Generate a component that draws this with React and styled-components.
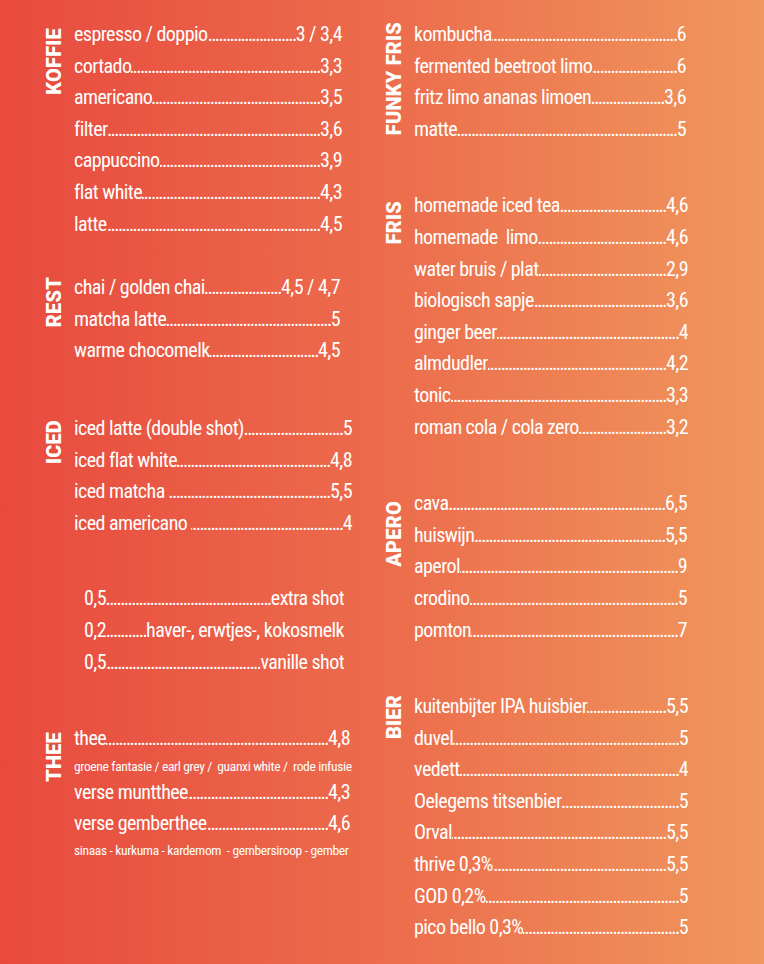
import React from "react";
import styled, { createGlobalStyle } from "styled-components";

const Global = createGlobalStyle`
  html, body { margin: 0; padding: 0; }
  body { background: #ec6b4b; }
`;

const Page = styled.div`
  display: flex;
  width: 764px;
  height: 964px;
  box-sizing: border-box;
  padding-top: 19px;
  overflow: hidden;
  background: linear-gradient(90deg, #e84a3e 0%, #ec6c4c 50%, #f0975d 100%);
  color: #fff;
  font-family: "Roboto Condensed", Roboto, "DejaVu Sans Condensed", sans-serif;
  font-stretch: condensed;
  font-weight: 400;
`;

const Column = styled.div`
  display: flex;
  flex-direction: column;
  width: ${(p) => p.$width}px;
  padding-left: ${(p) => p.$pad}px;
  box-sizing: border-box;
`;

const Section = styled.section`
  display: flex;
  align-items: flex-start;
  gap: 12px;
  margin-top: ${(p) => p.$top || 0}px;
`;

const Heading = styled.h2`
  margin: ${(p) => p.$offset || 0}px 0 0;
  width: 16px;
  flex: none;
  writing-mode: vertical-rl;
  transform: rotate(180deg);
  font-family: Roboto, "Open Sans", "DejaVu Sans", sans-serif;
  font-stretch: normal;
  font-weight: 900;
  font-size: 20px;
  line-height: 16px;
  letter-spacing: 0.2px;
  white-space: nowrap;
`;

const List = styled.div`
  display: flex;
  flex-direction: column;
  width: ${(p) => p.$width}px;
  margin-left: ${(p) => p.$indent || 0}px;
`;

const Row = styled.div`
  display: flex;
  align-items: baseline;
  height: 31.6px;
  line-height: 31.6px;
  font-size: 20px;
  letter-spacing: -0.55px;
  white-space: pre;
`;

const Leader = styled.span`
  flex: 1;
  min-width: 0;
  overflow: hidden;
  direction: rtl;
  letter-spacing: -1.6px;
`;

const Note = styled.div`
  font-size: 13.5px;
  letter-spacing: -0.35px;
  line-height: ${(p) => p.$lh}px;
  white-space: pre;
`;

const DOTS = ".".repeat(140);

function Item({ name, price, reverse }) {
  return (
    <Row>
      <span>{reverse ? price : name}</span>
      <Leader>{DOTS}</Leader>
      <span>{reverse ? name : price}</span>
    </Row>
  );
}

const koffie = [
  ["espresso / doppio", "3 / 3,4"],
  ["cortado", "3,3"],
  ["americano", "3,5"],
  ["filter", "3,6"],
  ["cappuccino", "3,9"],
  ["flat white", "4,3"],
  ["latte", "4,5"],
];

const rest = [
  ["chai / golden chai", "4,5 / 4,7"],
  ["matcha latte", "5"],
  ["warme chocomelk", "4,5"],
];

const iced = [
  ["iced latte (double shot)", "5"],
  ["iced flat white", "4,8"],
  ["iced matcha ", "5,5"],
  ["iced americano ", "4"],
];

const extras = [
  ["extra shot", "0,5"],
  ["haver-, erwtjes-, kokosmelk", "0,2"],
  ["vanille shot", "0,5"],
];

const funky = [
  ["kombucha", "6"],
  ["fermented beetroot limo", "6"],
  ["fritz limo ananas limoen", "3,6"],
  ["matte", "5"],
];

const fris = [
  ["homemade iced tea", "4,6"],
  ["homemade  limo", "4,6"],
  ["water bruis / plat", "2,9"],
  ["biologisch sapje", "3,6"],
  ["ginger beer", "4"],
  ["almdudler", "4,2"],
  ["tonic", "3,3"],
  ["roman cola / cola zero", "3,2"],
];

const apero = [
  ["cava", "6,5"],
  ["huiswijn", "5,5"],
  ["aperol", "9"],
  ["crodino", "5"],
  ["pomton", "7"],
];

const bier = [
  ["kuitenbijter IPA huisbier", "5,5"],
  ["duvel", "5"],
  ["vedett", "4"],
  ["Oelegems titsenbier", "5"],
  ["Orval", "5,5"],
  ["thrive 0,3%", "5,5"],
  ["GOD 0,2%", "5"],
  ["pico bello 0,3%", "5"],
];

function Block({ title, offset, top, width, items }) {
  return (
    <Section $top={top}>
      <Heading $offset={offset}>{title}</Heading>
      <List $width={width}>
        {items.map(([n, p]) => (
          <Item key={n} name={n} price={p} />
        ))}
      </List>
    </Section>
  );
}

export default function App() {
  return (
    <>
      <Global />
      <Page>
        <Column $width={386} $pad={46}>
          <Block title="KOFFIE" offset={9} width={268} items={koffie} />
          <Block title="REST" offset={5} top={32} width={266} items={rest} />
          <Block title="ICED" offset={7} top={46} width={278} items={iced} />
          <Section $top={44}>
            <List $width={260} $indent={38}>
              {extras.map(([n, p]) => (
                <Item key={n} name={n} price={p} reverse />
              ))}
            </List>
          </Section>
          <Section $top={45}>
            <Heading $offset={9}>THEE</Heading>
            <List $width={276}>
              <Item name="thee" price="4,8" />
              <Note $lh={22}>groene fantasie / earl grey /  guanxi white /  rode infusie</Note>
              <Item name="verse muntthee" price="4,3" />
              <Item name="verse gemberthee" price="4,6" />
              <Note $lh={20}>sinaas - kurkuma - kardemom  - gembersiroop - gember</Note>
            </List>
          </Section>
        </Column>
        <Column $width={378} $pad={0}>
          <Block title="FUNKY FRIS" offset={3} width={272} items={funky} />
          <Block title="FRIS" offset={11} top={45} width={274} items={fris} />
          <Block title="APERO" offset={13} top={45} width={273} items={apero} />
          <Block title="BIER" offset={4} top={45} width={274} items={bier} />
        </Column>
      </Page>
    </>
  );
}
